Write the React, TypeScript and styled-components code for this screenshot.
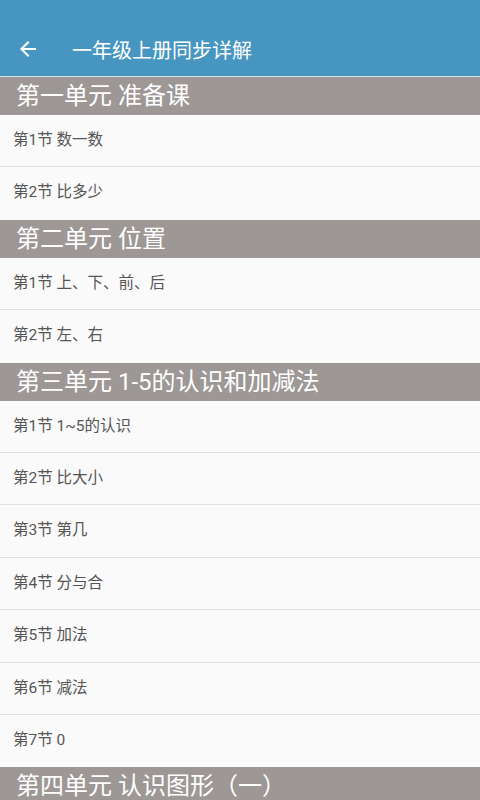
import React from 'react';
import styled, {createGlobalStyle} from 'styled-components';

const GlobalStyle = createGlobalStyle`
  html, body {
    margin: 0;
    padding: 0;
    background: #fafafa;
  }
  body {
    font-family: Roboto, "Noto Sans CJK SC", sans-serif;
  }
`;

const Page = styled.div`
  width: 480px;
  height: 800px;
  overflow: hidden;
  background: #fafafa;
`;

const Header = styled.header`
  height: 76px;
  padding-top: 22px;
  padding-left: 16px;
  box-sizing: border-box;
  background: #4796c1;
  border-bottom: 1px solid #d7e2e8;
  display: flex;
  align-items: center;
  box-sizing: content-box;
  height: 54px;
`;

const BackButton = styled.button`
  border: none;
  background: none;
  padding: 0;
  width: 24px;
  height: 24px;
  display: flex;
  align-items: center;
  justify-content: center;
  margin-right: 32px;
`;

const Title = styled.h1`
  margin: 0;
  font-size: 20px;
  font-weight: 400;
  color: #fff;
`;

const UnitTitle = styled.div`
  height: 38px;
  background: #9d9796;
  color: #fff;
  font-size: 24px;
  line-height: 38px;
  padding-left: 16px;
  white-space: nowrap;
`;

const LessonList = styled.ul`
  margin: 0;
  padding: 0;
  list-style: none;

  > li {
    height: 52.4px;
    line-height: 50px;
    padding-left: 13px;
    font-size: 15.5px;
    color: #555;
    border-bottom: 1px solid #e1e1e1;
    box-sizing: border-box;
  }

  > li:last-child {
    border-bottom: none;
  }
`;

const units = [
  {title: '第一单元 准备课', lessons: ['第1节 数一数', '第2节 比多少']},
  {title: '第二单元 位置', lessons: ['第1节 上、下、前、后', '第2节 左、右']},
  {
    title: '第三单元 1-5的认识和加减法',
    lessons: ['第1节 1~5的认识', '第2节 比大小', '第3节 第几', '第4节 分与合', '第5节 加法', '第6节 减法', '第7节 0'],
  },
  {title: '第四单元 认识图形（一）', lessons: []},
];

function BackArrow() {
  return (
    <svg width="24" height="24" viewBox="0 0 24 24">
      <path d="M20 11H7.83l5.59-5.59L12 4l-8 8 8 8 1.41-1.41L7.83 13H20v-2z" fill="#fff"/>
    </svg>
  );
}

export default function App() {
  return (
    <Page>
      <GlobalStyle/>
      <Header>
        <BackButton><BackArrow/></BackButton>
        <Title>一年级上册同步详解</Title>
      </Header>
      {units.map(unit =>
        <section key={unit.title}>
          <UnitTitle>{unit.title}</UnitTitle>
          <LessonList>
            {unit.lessons.map(lesson => <li key={lesson}>{lesson}</li>)}
          </LessonList>
        </section>
      )}
    </Page>
  );
}
